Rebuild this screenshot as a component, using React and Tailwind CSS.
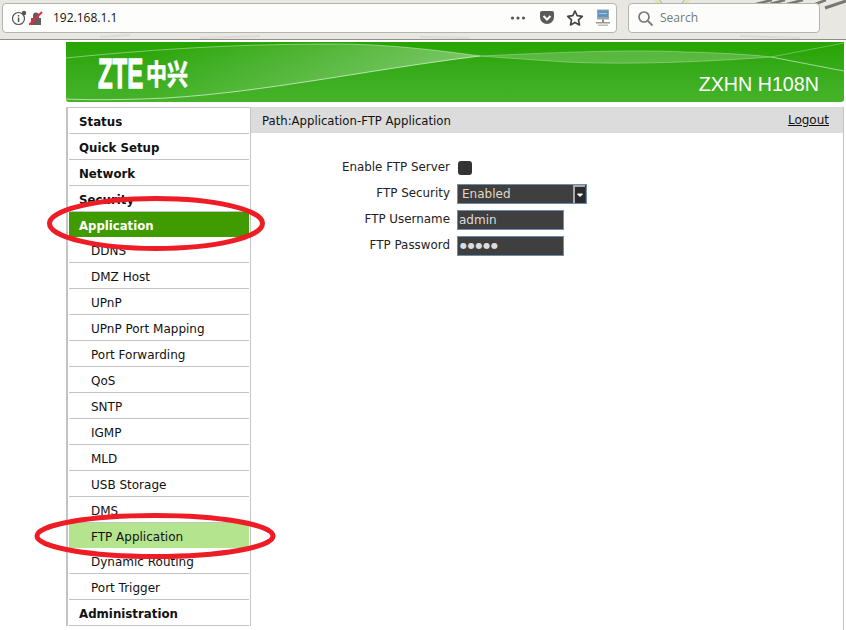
import React from "react";

const menu = [
  ["Status", 1], ["Quick Setup", 1], ["Network", 1], ["Security", 1], ["Application", 2],
  ["DDNS"], ["DMZ Host"], ["UPnP"], ["UPnP Port Mapping"], ["Port Forwarding"], ["QoS"], ["SNTP"],
  ["IGMP"], ["MLD"], ["USB Storage"], ["DMS"], ["FTP Application", 3], ["Dynamic Routing"], ["Port Trigger"], ["Administration", 1],
];

function MenuItem({ label, kind }) {
  if (kind === 2)
    return <div className="h-[25px] pl-[10px] bg-[#3f9b00] text-white font-bold leading-[29px] text-[11.7px]">{label}</div>;
  if (kind === 3)
    return <div className="h-[25px] pl-[22px] bg-[#b5e48f] text-[#111] leading-[29px] text-[12px]">{label}</div>;
  if (kind === 1)
    return <div className="h-[26px] pl-[10px] border-b border-[#c4c4c4] text-[#111] font-bold leading-[29px] text-[11.8px]">{label}</div>;
  return <div className="h-[26px] pl-[22px] border-b border-[#c4c4c4] text-[#111] leading-[28px] text-[12px]">{label}</div>;
}

function Row({ label, children }) {
  return (
    <div className="flex items-center h-[26px]">
      <div className="w-[199px] text-right text-[11.9px] text-[#222]">{label}</div>
      <div className="ml-[7px] flex items-center">{children}</div>
    </div>
  );
}

export default function App() {
  return (
    <div className="relative w-[846px] h-[630px] overflow-hidden bg-white font-['DejaVu_Sans',sans-serif]">
      {/* browser toolbar */}
      <div className="relative h-[40px] bg-[#e8e7e1] border-b border-[#8f8e88] overflow-hidden flex items-start pt-[3px] pl-[2px]">
        <svg className="absolute inset-0" width="846" height="40" fill="none">
          <circle cx="672" cy="-8" r="18" stroke="#dfe8a0" strokeWidth="3" />
          <circle cx="672" cy="-8" r="15" stroke="#a8a8a0" strokeWidth="1" />
          <path d="M756 4 L772 0 M770 4 L785 0 M787 4 L803 0 M810 6 L826 0" stroke="#77776e" strokeWidth="2.5" />
          <path d="M825 8 L846 1" stroke="#77776e" strokeWidth="3" />
          <path d="M100 37 L130 35 M200 38 L260 36 M420 37 L470 38 M740 36 L800 38" stroke="#dbdad3" strokeWidth="2" />
        </svg>
        <div className="relative w-[615px] h-[30px] bg-[#fdfdfc] border border-[#b4b4b0] rounded-[4px] flex items-center pl-[8px]">
          <svg width="16" height="16" viewBox="0 0 16 16" className="shrink-0">
            <circle cx="7.5" cy="8.5" r="6" fill="none" stroke="#555" strokeWidth="1.2" />
            <rect x="6.8" y="7.5" width="1.5" height="4.5" fill="#555" />
            <rect x="6.8" y="5" width="1.5" height="1.5" fill="#555" />
            <circle cx="13" cy="3" r="2.2" fill="#555" />
          </svg>
          <svg width="14" height="14" viewBox="0 0 14 14" className="ml-[2px] shrink-0">
            <path d="M2 7 h10 v7 h-10z M4 7 V4.5 a3 3 0 0 1 6 0 V7" fill="#5f5f5f" />
            <path d="M0 14 L13 1" stroke="#f0263c" strokeWidth="2" />
          </svg>
          <span className="ml-[10px] text-[12px] text-[#111] font-['Open_Sans',sans-serif]">192.168.1.1</span>
          <div className="ml-auto flex items-center mr-[5px]">
            <svg width="16" height="6" viewBox="0 0 16 6"><circle cx="2.5" cy="3" r="1.6" fill="#555"/><circle cx="8" cy="3" r="1.6" fill="#555"/><circle cx="13.5" cy="3" r="1.6" fill="#555"/></svg>
            <svg width="16" height="16" viewBox="0 0 16 16" className="ml-[13px]">
              <path d="M1 3 a2 2 0 0 1 2 -2 h10 a2 2 0 0 1 2 2 v4 a7 7 0 0 1 -14 0z" fill="#5a5a5a" />
              <path d="M4.5 6 L8 9.5 L11.5 6" fill="none" stroke="#fff" strokeWidth="2" />
            </svg>
            <svg width="18" height="18" viewBox="0 0 18 18" className="ml-[11px]">
              <path d="M9 2 L11.2 6.7 L16.3 7.3 L12.5 10.8 L13.5 15.9 L9 13.4 L4.5 15.9 L5.5 10.8 L1.7 7.3 L6.8 6.7 Z" fill="none" stroke="#444" strokeWidth="1.7" strokeLinejoin="round" />
            </svg>
            <svg width="16" height="18" viewBox="0 0 16 18" className="ml-[11px]">
              <rect x="2" y="0.5" width="12" height="10" fill="#9aa6ac" />
              <rect x="3" y="1.5" width="10" height="6.5" fill="#5f93c4" />
              <rect x="4" y="4" width="8" height="1" fill="#a9c8e2" />
              <rect x="7" y="10.5" width="2" height="3" fill="#8a8a80" />
              <rect x="1" y="13" width="14" height="1.5" fill="#9a9a90" />
              <rect x="3" y="15.5" width="10" height="1.5" fill="#c0c0b4" />
            </svg>
          </div>
        </div>
        <div className="relative ml-[11px] w-[192px] h-[30px] bg-[#fcfcfa] border border-[#b4b4b0] rounded-[4px] flex items-center pl-[8px]">
          <svg width="17" height="17" viewBox="0 0 17 17">
            <circle cx="7" cy="7" r="5" fill="none" stroke="#777" strokeWidth="1.7" />
            <path d="M10.8 10.8 L15.5 15.5" stroke="#777" strokeWidth="1.8" />
          </svg>
          <span className="ml-[6px] text-[12px] text-[#6f7b80] font-['Open_Sans',sans-serif]">Search</span>
        </div>
      </div>

      {/* page */}
      <div className="ml-[66px] mr-[2px] pt-[2px]">
        <div className="relative h-[60px] rounded-b-[3px] overflow-hidden bg-gradient-to-b from-[#26a400] to-[#46b32a] flex items-center justify-between">
          <svg className="absolute inset-0" width="778" height="60" viewBox="0 0 778 60" fill="none">
            <defs>
              <linearGradient id="lens" x1="0" y1="0" x2="1" y2="0">
                <stop offset="0.2" stopColor="#fff" stopOpacity="0" />
                <stop offset="1" stopColor="#fff" stopOpacity="0.36" />
              </linearGradient>
            </defs>
            <path d="M0 16 C100 6 180 2 270 2 C320 2 370 8 414 14 C300 28 200 50 100 56 C60 58 20 58 0 57Z" fill="url(#lens)" />
            <path d="M0 16 C100 6 180 2 270 2 C320 2 370 8 414 14" stroke="#fff" strokeOpacity="0.4" strokeWidth="1" />
            <path d="M0 57 C20 58 60 58 100 56 C200 50 300 28 414 14" stroke="#fff" strokeOpacity="0.6" strokeWidth="1" />
            <path d="M414 14 C480 11 560 7 620 10 C660 11 690 13 705 15 C640 20 560 23 500 20 C470 18 440 16 414 14Z" fill="#fff" fillOpacity="0.2" stroke="#fff" strokeOpacity="0.3" />
            <path d="M705 15 L778 1" stroke="#fff" strokeOpacity="0.3" />
            <path d="M705 15 L778 29" stroke="#fff" strokeOpacity="0.55" />
          </svg>
          <div className="relative ml-[32px] mt-[3px] flex items-center text-white font-bold leading-none">
            <span className="font-['Liberation_Sans',sans-serif] text-[42px] inline-block w-[47px] origin-left scale-x-[0.57] [-webkit-text-stroke:1.3px_white]">ZTE</span>
            <span className="font-['Noto_Sans_CJK_SC',sans-serif] text-[21px] ml-[1px] scale-y-[1.35] [-webkit-text-stroke:0.5px_white]">中兴</span>
          </div>
          <div className="relative mr-[25px] mt-[25px] text-white text-[19.7px] font-['Liberation_Sans',sans-serif]">ZXHN H108N</div>
        </div>

        <div className="mt-[5px] flex items-start">
          <div className="w-[185px] shrink-0 border-l-2 border-r border-t border-[#c4c4c4] pl-[1px] pr-[1px]">
            {menu.map(([label, kind]) => <MenuItem key={label} label={label} kind={kind} />)}
          </div>
          <div className="flex-1 border-r border-[#c4c4c4] h-[525px]">
            <div className="h-[26px] bg-[#dcdcdc] flex items-center justify-between pl-[11px] pr-[14px] text-[11.7px] leading-[18px] text-[#111]">
              <span className="pt-[1px]">Path:Application-FTP Application</span>
              <span className="underline text-[12px]">Logout</span>
            </div>
            <div className="mt-[22px]">
              <Row label="Enable FTP Server">
                <div className="ml-[1px] w-[14px] h-[14px] rounded-[3px] bg-[#333]" />
              </Row>
              <Row label="FTP Security">
                <div className="w-[130px] h-[20px] bg-[#3f3f3f] border border-[#6d8daa] flex items-center justify-between pl-[4px] pr-[1px] text-[12px] text-[#e0d8c8]">
                  <span>Enabled</span>
                  <div className="w-[12px] h-[18px] bg-[#2a2a2a] border-l-2 border-t-2 border-[#aaa] flex items-center justify-center">
                    <svg width="8" height="5" viewBox="0 0 8 5"><path d="M1.5 1 L4 3.5 L6.5 1Z" fill="#fff" stroke="#fff" /></svg>
                  </div>
                </div>
              </Row>
              <Row label="FTP Username">
                <div className="w-[107px] h-[20px] bg-[#3f3f3f] border border-[#6d8daa] flex items-center pl-[1px] text-[12px] text-[#dcdcdc]">admin</div>
              </Row>
              <Row label="FTP Password">
                <div className="w-[107px] h-[20px] bg-[#3f3f3f] border border-[#6d8daa] flex items-center pl-[2px] text-[8px] tracking-[0.8px] text-[#dcdcdc]">●●●●●</div>
              </Row>
            </div>
          </div>
        </div>
      </div>

      {/* hand-drawn annotations */}
      <svg className="absolute inset-0 pointer-events-none" width="846" height="630" fill="none">
        <ellipse cx="156" cy="223.5" rx="106.5" ry="25" stroke="#ee1c25" strokeWidth="5" />
        <ellipse cx="155" cy="536" rx="118" ry="20.5" stroke="#ee1c25" strokeWidth="5" />
      </svg>
    </div>
  );
}
